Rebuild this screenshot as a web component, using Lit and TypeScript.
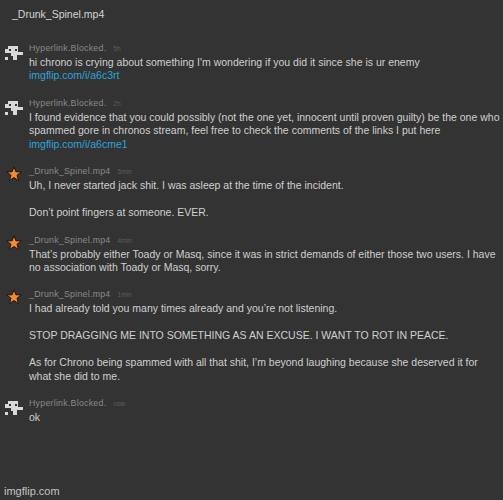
import { LitElement, html, css } from "lit";
import { customElement } from "lit/decorators.js";

type Part = { t: string; link?: boolean };
type Comment = { user: "h" | "d"; time: string; lines: Part[]; gap: string };

const H = "Hyperlink.Blocked.";
const D = "_Drunk_Spinel.mp4";

const comments: Comment[] = [
  { user: "h", time: "5h", gap: "g1", lines: [
    { t: "hi chrono is crying about something I'm wondering if you did it since she is ur enemy" },
    { t: "imgflip.com/i/a6c3rt", link: true } ] },
  { user: "h", time: "2h", gap: "g2", lines: [
    { t: "I found evidence that you could possibly (not the one yet, innocent until proven guilty) be the one who" },
    { t: "spammed gore in chronos stream, feel free to check the comments of the links I put here" },
    { t: "imgflip.com/i/a6cme1", link: true } ] },
  { user: "d", time: "5min", gap: "g2", lines: [
    { t: "Uh, I never started jack shit. I was asleep at the time of the incident." },
    { t: "" },
    { t: "Don\u2019t point fingers at someone. EVER." } ] },
  { user: "d", time: "4min", gap: "g2", lines: [
    { t: "That\u2019s probably either Toady or Masq, since it was in strict demands of either those two users. I have" },
    { t: "no association with Toady or Masq, sorry." } ] },
  { user: "d", time: "1min", gap: "g2", lines: [
    { t: "I had already told you many times already and you\u2019re not listening." },
    { t: "" },
    { t: "STOP DRAGGING ME INTO SOMETHING AS AN EXCUSE. I WANT TO ROT IN PEACE." },
    { t: "" },
    { t: "As for Chrono being spammed with all that shit, I\u2019m beyond laughing because she deserved it for" },
    { t: "what she did to me." } ] },
  { user: "h", time: "now", gap: "g2", lines: [{ t: "ok" }] },
];

const avatar = html`<svg class="pixel" viewBox="0 0 18 15" width="18" height="15">
  <g fill="#d8d8d8">
    <rect x="3" y="0" width="10" height="4" />
    <rect x="0" y="3" width="13" height="4" />
    <rect x="11" y="6" width="7" height="3" />
    <rect x="6" y="7" width="6" height="3" />
    <rect x="0" y="11" width="3" height="3" />
    <rect x="8" y="10" width="4" height="4" />
  </g>
  <g fill="#333333">
    <rect x="4" y="3" width="2" height="2" />
    <rect x="10" y="3" width="2" height="2" />
  </g>
</svg>`;

const star = html`<svg class="star" viewBox="0 0 16 16" width="16" height="16">
  <path fill="#f58a2e" stroke="#1c1610" stroke-width="1" stroke-linejoin="miter"
    d="M8 .8l1.9 5 5.4.1-4.3 3.3 1.5 5.4-4.5-3.1-4.5 3.1 1.5-5.4L.7 5.9l5.4-.1z" />
</svg>`;

@customElement("app-root")
export class AppRoot extends LitElement {
  static styles = css`
    :host {
      display: block;
      width: 503px;
      height: 500px;
      background: #333333;
      font-family: "Liberation Sans", Arial, sans-serif;
      overflow: hidden;
      position: relative;
    }
    .title {
      padding: 7px 0 0 12px;
      font-size: 10.5px;
      line-height: 14px;
      color: #d4d4d4;
      height: 14px;
    }
    .list {
      display: flex;
      flex-direction: column;
      padding-top: 20px;
    }
    .comment {
      display: grid;
      grid-template-columns: 29px 1fr;
    }
    .g1 { margin-top: 0; }
    .g2 { margin-top: 13px; }
    .icon {
      display: flex;
      align-items: flex-start;
      padding-left: 5px;
      padding-top: 5px;
    }
    .icon.d { padding-left: 6px; padding-top: 2px; }
    .head {
      display: flex;
      align-items: baseline;
      height: 15px;
      line-height: 14px;
    }
    .name {
      font-size: 8.8px;
      color: #8a8a8a;
      letter-spacing: 0.25px;
    }
    .time {
      font-size: 6.5px;
      color: #5f5f5f;
      margin-left: 7px;
    }
    .line {
      font-size: 10.5px;
      line-height: 13.45px;
      height: 13.45px;
      color: #d0d0d0;
      white-space: nowrap;
    }
    .link { color: #2aa5dc; }
    .wm {
      position: absolute;
      left: 4px;
      bottom: 2px;
      font-size: 11px;
      line-height: 14px;
      color: #c4c4c4;
    }
    svg { display: block; }
  `;

  render() {
    return html`
      <div class="title">${D}</div>
      <div class="list">
        ${comments.map(
          (c) => html`<div class="comment ${c.gap}">
            <div class="icon ${c.user}">${c.user === "h" ? avatar : star}</div>
            <div>
              <div class="head">
                <span class="name">${c.user === "h" ? H : D}</span>
                <span class="time">${c.time}</span>
              </div>
              ${c.lines.map(
                (l) => html`<div class="line ${l.link ? "link" : ""}">${l.t}</div>`
              )}
            </div>
          </div>`
        )}
      </div>
      <div class="wm">imgflip.com</div>
    `;
  }
}
